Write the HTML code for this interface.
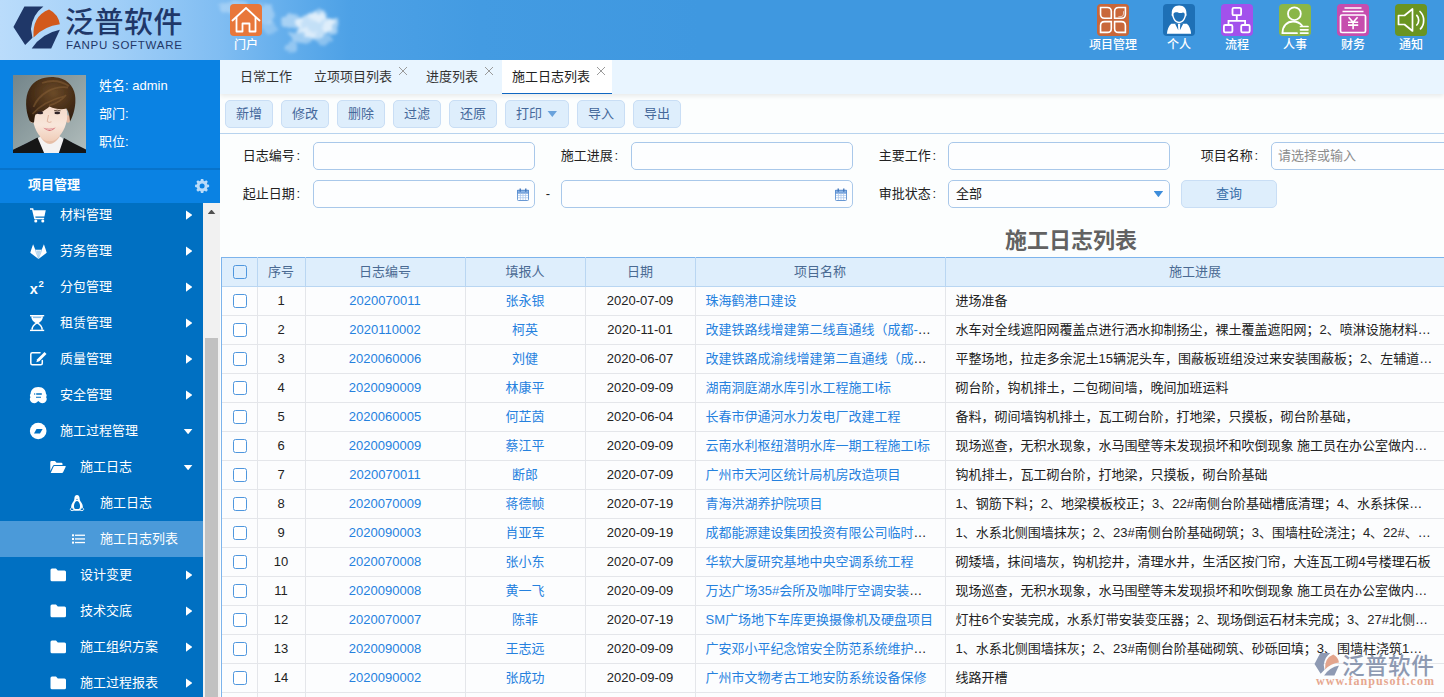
<!DOCTYPE html>
<html lang="zh-CN"><head><meta charset="utf-8"><title>施工日志列表</title>
<style>
*{box-sizing:border-box;margin:0;padding:0}
html,body{width:1444px;height:697px;overflow:hidden;background:#fcfefe;font-family:"Liberation Sans","Noto Sans CJK SC",sans-serif;font-size:13px;color:#222}
a{text-decoration:none;color:#2581de}
#hdr{position:absolute;left:0;top:0;width:1444px;height:60px;overflow:hidden;
 background:linear-gradient(90deg,#badcfb 0px,#a5d1f8 100px,#80bdf2 220px,#64aeec 285px,#4da1e6 350px,#439be2 480px,#3f98e0 700px,#3f98e0 1444px)}
#hdr .cloud{position:absolute;border-radius:50%;filter:blur(3px)}
#logo{position:absolute;left:12px;top:4px}
#logotxt{position:absolute;left:65px;top:5px;font-size:29px;font-weight:500;color:#1f3768;letter-spacing:0.5px;line-height:36px;white-space:nowrap;font-family:"Liberation Sans","Noto Sans CJK SC",sans-serif}
#logoen{position:absolute;left:66px;top:37.5px;font-size:11.5px;color:#1f3768;letter-spacing:0.74px;line-height:14px;white-space:nowrap}
.nav{position:absolute;top:4px;width:32px;height:32px;border-radius:4px}
.navl{position:absolute;top:37px;height:14px;line-height:14px;font-size:12px;font-weight:500;color:#fff;text-align:center;white-space:nowrap}
#side{position:absolute;left:0;top:60px;width:220px;height:637px;background:#0a82e3;overflow:hidden}
#side .info{position:absolute;left:99px;color:#fff;font-size:13px;line-height:16px;white-space:nowrap}
#side .sep{position:absolute;left:0;top:108px;width:220px;height:2px;background:#0773cb}
#side .ttl{position:absolute;left:28px;top:117px;color:#fff;font-weight:700;font-size:13px;line-height:16px}
#menu{position:absolute;left:0;top:143px;width:203px;height:494px;background:#0070c2;overflow:hidden}
.mi{position:absolute;left:0;width:203px;height:36px;color:#fff;font-size:13px;line-height:36px;white-space:nowrap}
.mi.sel{background:#4b9ad9}
.mi svg{position:absolute;top:10px;width:16px;height:16px;fill:#fff;overflow:visible}
.mi .t{position:absolute;top:0}
.mi .ar{position:absolute;left:186px;top:13.4px;width:6.4px;height:9.4px;background:#fff;clip-path:polygon(0 0,100% 50%,0 100%)}
.mi .ad{position:absolute;left:183.4px;top:15.6px;width:9.4px;height:5.6px;background:#fff;clip-path:polygon(0 0,100% 0,50% 100%)}
#sb{position:absolute;left:203px;top:143px;width:17px;height:494px;background:#f1f1f1}
#sb .up{position:absolute;left:4.5px;top:6.6px;width:8px;height:4.6px;background:#505050;clip-path:polygon(50% 0,100% 100%,0 100%)}
#sb .th{position:absolute;left:2px;top:135px;width:13px;height:400px;background:#c1c1c1}
#main{position:absolute;left:220px;top:60px;width:1224px;height:637px;overflow:hidden;background:#fcfefe}
#tabs{position:absolute;left:0;top:0;width:1224px;height:34px;background:#e9f5ff;box-shadow:0 2px 5px rgba(0,0,0,.085)}
.tab{position:absolute;top:0;height:34px;line-height:33px;font-size:13px;color:#333;white-space:nowrap}
.tab.on{background:#fff;border-bottom:1px solid #0f67c2;color:#222}
.tab .x{position:absolute;top:7px;width:8px;height:8px;font-size:0;line-height:0;color:transparent;overflow:hidden;background:linear-gradient(45deg,transparent 44%,#9a9a9a 44%,#9a9a9a 56%,transparent 56%),linear-gradient(-45deg,transparent 44%,#9a9a9a 44%,#9a9a9a 56%,transparent 56%)}
.btn{position:absolute;top:40px;height:28px;border:1px solid #c9def5;border-radius:5px;background:#deeefc;color:#44679a;font-size:13px;line-height:25px;text-align:center;white-space:nowrap}
#tbline{position:absolute;left:0;top:73px;width:1224px;height:1px;background:#b7d3ee}
.lbl{position:absolute;width:80px;text-align:right;font-size:13px;line-height:28px;height:28px;color:#222;white-space:nowrap}
.inp{position:absolute;height:28px;border:1px solid #a9c8ea;border-radius:5px;background:#fdfeff;font-size:13px;line-height:26px;color:#222;padding-left:7px;white-space:nowrap}
#gtitle{position:absolute;left:3px;top:167px;width:1696px;text-align:center;font-size:22px;font-weight:700;color:#626262;line-height:28px}
.tblwrap{position:absolute;left:1px;top:197px;width:1696px}
table.grid{border-collapse:collapse;table-layout:fixed;width:1696px;font-size:13px}
table.grid th{height:29px;padding:0 0 2px 0 !important;background:#deeefc;color:#4a6a93;font-weight:400;border:1px solid #b9d6f2;text-align:center;padding:0}
table.grid td{height:29px;border:1px solid #e4e6ea;text-align:center;padding:0 0 2px 0;color:#222;white-space:nowrap;background:#fcfdfe}
table.grid td.c0, table.grid th.c0{border-left:0}
#lb{position:absolute;left:1px;top:197px;width:1px;height:440px;background:#7db4ec;z-index:3}
table.grid th{border-top-color:#7db4ec !important}
.c0{width:36px}.c1{width:48px}.c2{width:160px}.c3{width:120px}.c4{width:110px}.c5{width:250px}.c6{width:500px}
td.c5,td.c6{text-align:left !important}
.el{overflow:hidden;text-overflow:ellipsis;white-space:nowrap;padding-left:10px}
.w5{width:237px}.w6{width:487px}.w5x{width:249px}
.cb{display:inline-block;width:14px;height:14px;border:1px solid #4f97de;border-radius:2.5px;background:#fff;vertical-align:middle;position:relative;left:1.5px}
th .cb{background:transparent}
#wm{position:absolute;left:1300px;top:640px;width:144px;height:57px}

.z{position:relative;top:-1px}
.co{font-style:normal;padding-left:1.5px}

</style></head><body>
<div id="hdr">
<svg style="position:absolute;left:200px;top:0" width="280" height="60" viewBox="0 0 280 60">
<defs><filter id="cf" x="-20%" y="-20%" width="140%" height="140%"><feTurbulence type="fractalNoise" baseFrequency="0.12" numOctaves="3" seed="7" result="n"/><feDisplacementMap in="SourceGraphic" in2="n" scale="9" xChannelSelector="R" yChannelSelector="G" result="d"/><feGaussianBlur in="d" stdDeviation="1.6"/></filter></defs>
<g filter="url(#cf)" fill="#fff">
<ellipse cx="34" cy="8" rx="14" ry="7" opacity="0.28"/>
<ellipse cx="66" cy="14" rx="9" ry="10" opacity="0.32"/>
<ellipse cx="70" cy="28" rx="6" ry="7" opacity="0.24"/>
<ellipse cx="92" cy="22" rx="11" ry="7" opacity="0.44"/>
<ellipse cx="114" cy="25" rx="19" ry="12" opacity="0.64"/>
<ellipse cx="118" cy="16" rx="10" ry="6" opacity="0.48"/>
<ellipse cx="131" cy="27" rx="8" ry="8" opacity="0.48"/>
<ellipse cx="104" cy="36" rx="14" ry="7" opacity="0.40"/>
<ellipse cx="92" cy="46" rx="7" ry="5" opacity="0.32"/>
<ellipse cx="124" cy="40" rx="8" ry="5" opacity="0.32"/>
</g></svg>
<svg id="logo" style="left:0;top:0;position:absolute" width="220" height="62" viewBox="0 0 1444 407">
<path d="M88,178 L160,42 L285,42 Q212,95 203,190 L213,248 L165,296 Z" fill="#1f3768"/>
<path d="M220,246 Q210,105 322,62 Q382,92 393,160 Q290,172 220,246 Z" fill="#d2591c"/>
<path d="M208,318 Q275,218 393,195 L336,318 Z" fill="#1f3768"/>
</svg>
<div id="logotxt">泛普软件</div>
<div id="logoen">FANPU SOFTWARE</div>

<div class="nav" style="left:230px;background:#e8773a">
<svg width="32" height="32" viewBox="0 0 32 32" fill="none" stroke="#fff" stroke-width="1.8" stroke-linecap="round" stroke-linejoin="round"><path d="M2.5,16.5 L16,4 L29.5,16.5"/><path d="M6.5,13.5 V27.5 H12.5 V19.5 H19.5 V27.5 H25.5 V13.5"/></svg></div>
<div class="navl" style="top:38px;left:222px;width:48px">门户</div>

<div class="nav" style="left:1097px;background:#c9673a">
<svg width="32" height="32" viewBox="0 0 32 32" fill="none" stroke="#fff" stroke-width="1.6" stroke-linejoin="miter"><path d="M3.550,3.550 H10.300 Q14.300,3.550 14.300,7.550 V14.300 H7.550 Q3.550,14.300 3.550,10.300 Z"/><path d="M28.400,3.550 V10.300 Q28.400,14.300 24.400,14.300 H17.600 V7.550 Q17.600,3.550 21.600,3.550 Z"/><path d="M14.300,17.600 V24.400 Q14.300,28.400 10.300,28.400 H3.550 V21.600 Q3.550,17.600 7.550,17.600 Z"/><path d="M17.600,17.600 H24.400 Q28.400,17.600 28.400,21.600 V28.400 H21.600 Q17.600,28.400 17.600,24.400 Z"/><path d="M26.500,7.200 V10 Q26.500,12.400 24,12.600 L21.300,12.800" stroke-width=".7" opacity=".85"/></svg></div>
<div class="navl" style="top:38px;left:1076px;width:74px">项目管理</div>

<div class="nav" style="left:1163px;background:#1e70b6">
<svg width="32" height="32" viewBox="0 0 32 32"><path d="M16.100,1.600 C11,1.600 8.600,5 8.800,9.500 C8.400,10.500 8.600,12 9.400,12.600 C10.200,16.200 12.800,19.200 16.100,19.200 C19.400,19.200 22,16.200 22.800,12.600 C23.600,12 23.800,10.500 23.400,9.500 C23.600,5 21.200,1.600 16.100,1.600 Z" fill="#fff"/><path d="M10.500,10.600 C10.300,9.600 11,8.600 12,8.400 C13.400,8.100 14.500,8.300 15.500,8.700 C17,9.300 18.500,8.900 20,8.400 C21.200,8.400 21.900,9.500 21.700,10.600 C21.400,14.600 19.200,17.700 16.100,17.700 C13,17.700 10.800,14.600 10.500,10.600 Z" fill="#1e70b6"/><path d="M3.900,29.800 C4.200,25.500 5.800,21.800 8.300,19.700 L23.900,19.700 C26.400,21.800 27.800,25.500 28.100,29.800 Z" fill="#fff"/><path d="M11.900,19.600 H14.900 L15.300,26.200 Z M20.300,19.600 H17.300 L16.900,26.200 Z" fill="#1e70b6"/></svg></div>
<div class="navl" style="top:38px;left:1150px;width:58px">个人</div>

<div class="nav" style="left:1221px;background:#a251ec">
<svg width="32" height="32" viewBox="0 0 32 32" fill="none" stroke="#fff" stroke-width="1.8"><rect x="11.500" y="3.800" width="8.600" height="7.400" rx="1.300"/><path d="M15.800,11.200 V16.800 M7.500,21 V16.800 H24.100 V21"/><rect x="2.900" y="21" width="8.500" height="7.400" rx="1.300"/><rect x="20.200" y="21" width="8.500" height="7.400" rx="1.300"/></svg></div>
<div class="navl" style="top:38px;left:1208px;width:58px">流程</div>

<div class="nav" style="left:1279px;background:#8ab648">
<svg width="32" height="32" viewBox="0 0 32 32" fill="none" stroke="#fff" stroke-width="1.8" stroke-linecap="round"><circle cx="15.400" cy="9.700" r="6.400"/><path d="M3.500,29 C3.500,22 8,17.500 14,17.500 C18,17.500 21,19 23,21.500"/><path d="M3.500,29.200 H18"/><path d="M21.500,22.500 H29 M21.500,25.800 H29 M21.500,29.100 H29" stroke-width="1.700"/></svg></div>
<div class="navl" style="top:38px;left:1266px;width:58px">人事</div>

<div class="nav" style="left:1337px;background:#c64dae">
<svg width="32" height="32" viewBox="0 0 32 32" fill="none" stroke="#fff" stroke-width="1.700"><path d="M7.500,4 H24.500 M5.500,7.500 H26.500"/><rect x="3.500" y="11" width="25" height="17.500" rx="1.500"/><path d="M11.600,13.200 L16.100,18.300 L20.600,13.200 M16.100,18.300 V25.200 M11,18.300 H21.200 M11,21.100 H21.200" stroke-width="1.600"/></svg></div>
<div class="navl" style="top:38px;left:1324px;width:58px">财务</div>

<div class="nav" style="left:1395px;background:#6a9422">
<svg width="32" height="32" viewBox="0 0 32 32" fill="none" stroke="#fff" stroke-width="1.700" stroke-linejoin="round" stroke-linecap="round"><path d="M3.500,11.500 H9.500 L17.500,5 V27 L9.500,20.500 H3.500 Z"/><path d="M21.800,11.300 C24.300,13.800 24.300,18.500 21.800,21"/><path d="M25,7.500 C29.800,12 29.800,20.500 25.500,24.800"/></svg></div>
<div class="navl" style="top:38px;left:1382px;width:58px">通知</div>
</div>

<div id="side">
<svg style="position:absolute;left:13px;top:15px" width="73" height="78" viewBox="0 0 73 78">
<defs><linearGradient id="abg" x1="0" y1="0" x2="1" y2="1"><stop offset="0" stop-color="#74858a"/><stop offset=".5" stop-color="#90a0a2"/><stop offset="1" stop-color="#b2bdbc"/></linearGradient>
<radialGradient id="ahr" cx=".55" cy=".35" r=".7"><stop offset="0" stop-color="#6b4a28"/><stop offset=".55" stop-color="#4a3019"/><stop offset="1" stop-color="#2e1d0f"/></radialGradient>
<linearGradient id="afc" x1="0" y1="0" x2="0" y2="1"><stop offset="0" stop-color="#f3d6c4"/><stop offset=".6" stop-color="#f8e6da"/><stop offset="1" stop-color="#f0cdb9"/></linearGradient>
<filter id="abl" x="-5%" y="-5%" width="110%" height="110%"><feGaussianBlur stdDeviation=".5"/></filter></defs>
<rect width="73" height="78" fill="url(#abg)"/>
<g filter="url(#abl)">
<path d="M22,79 L25,63 L30,60 H44 L49.500,63 L53.500,79 Z" fill="#f4f2f2"/>
<path d="M-1,79 V75.300 L14,68 L24.500,62.500 L31.500,79 Z" fill="#141418"/>
<path d="M74,79 V75 L60,68 L51,63 L45.500,79 Z" fill="#141418"/>
<path d="M27.500,54 L27.500,62 Q36.500,76 46.500,62 L46.500,54 Z" fill="#e6bea7"/>
<ellipse cx="19" cy="44" rx="2.200" ry="3.800" fill="#e3b8a1"/><ellipse cx="55" cy="44" rx="2.200" ry="3.800" fill="#e3b8a1"/>
<path d="M19.600,40 C19.600,52 26,62 31,65 C34,66.600 39,66.600 42,65 C47,62 54.300,52 54.300,40 C54.300,30 48,26 37,26 C26,26 19.600,30 19.600,40 Z" fill="url(#afc)"/>
<path d="M16.500,45.500 C12.500,36 11.500,22 16.500,13.500 C21.500,4.500 32,1.200 42,2.200 C52.500,3 60.500,10 62,20 C63.500,30 60.500,40 57,46.500 C56.500,41 56,37 53.500,33.500 C48,35 42,34 36.500,31.500 C32,35.500 26,38.500 22.500,39.500 C21.500,41.500 21.500,44.500 21,47.500 C19,47.500 17.500,47 16.500,45.500 Z" fill="url(#ahr)"/>
<path d="M20.500,32 C26,19 40,10.500 55,12.500 M19.500,39 C27,30.500 38,24.500 52,21 M29,8 C38,4.800 48,5.800 56,11 M36,30.500 C42,29 49,25 53,20" fill="none" stroke="#8a6238" stroke-width="1.800" opacity=".5"/>
<path d="M24,35.800 Q27.300,34.600 30.600,35.800 M41,35.800 Q44.300,34.600 47.600,35.800" fill="none" stroke="#4a3424" stroke-width="1" opacity=".8"/>
<ellipse cx="27.300" cy="37.900" rx="2.900" ry="1.400" fill="#2e2226"/><ellipse cx="44.300" cy="37.900" rx="2.900" ry="1.400" fill="#2e2226"/>
<path d="M35.500,40 L34.200,46.500 Q36.200,48.200 38.500,46.800" fill="none" stroke="#dcae98" stroke-width=".9"/>
<path d="M30.300,52.800 Q36.500,55 42.700,52.400 Q37,59.200 30.300,52.800 Z" fill="#d36e74"/>
<path d="M31.800,53.500 Q36.500,55.200 41.200,53.300 Q36.800,56.300 31.800,53.500 Z" fill="#fdf3f3"/>
</g>
</svg>
<div class="info" style="top:18px">姓名: admin</div>
<div class="info" style="top:46px">部门:</div>
<div class="info" style="top:74px">职位:</div>
<div class="sep"></div>
<div class="ttl">项目管理</div>
<svg style="position:absolute;left:194px;top:118px" width="16" height="16" viewBox="0 0 16 16"><path d="M6.700,0.800 H9.300 L9.700,2.800 L10.900,3.300 L12.600,2.200 L14.400,4 L13.300,5.700 L13.800,6.900 L15.800,7.300 V9.900 L13.800,10.300 L13.300,11.500 L14.400,13.200 L12.600,15 L10.900,13.900 L9.700,14.400 L9.300,16.400 H6.700 L6.300,14.400 L5.100,13.900 L3.400,15 L1.600,13.200 L2.700,11.500 L2.200,10.300 L0.200,9.900 V7.300 L2.200,6.900 L2.700,5.700 L1.600,4 L3.400,2.200 L5.100,3.300 L6.300,2.800 Z M8,5.800 A2.800,2.800 0 1 0 8,11.400 A2.800,2.800 0 1 0 8,5.800 Z" fill="#b9dbf9" fill-rule="evenodd" transform="translate(0.900,0.200) scale(0.900)"/></svg>
<div id="menu">
<div class="mi" style="top:-6px"><svg viewBox="0 0 16 16" style="left:30px"><g transform="translate(-0.3,-0.6) scale(1.03)"><path d="M0.300,1.800 H3.400 L3.900,3.800 H15.600 L14.300,9.900 H5.400 L5.700,11 H14 V12.500 H4.500 L2.300,3.300 H0.300 Z"/><circle cx="5.900" cy="14.200" r="1.500"/><circle cx="12.700" cy="14.200" r="1.500"/></g></svg><span class="t" style="left:60px">材料管理</span><i class="ar"></i></div>
<div class="mi" style="top:30px"><svg viewBox="0 0 16 16" style="left:30px"><path d="M8.500,16 L0.300,9.800 L1.200,6.800 L3.100,1.200 L5.300,6.800 H11.700 L13.900,1.200 L15.800,6.800 L16.700,9.800 Z"/><path d="M8.500,14.800 L6.300,7.400 H10.700 Z" fill="#0070c2" opacity=".28"/><path d="M5.300,7 L8.400,15.400 M11.700,7 L8.600,15.400" stroke="#0070c2" stroke-width=".5" fill="none" opacity=".6"/></svg><span class="t" style="left:60px">劳务管理</span><i class="ar"></i></div>
<div class="mi" style="top:66px"><svg viewBox="0 0 16 16" style="left:30px"><text x="-0.300" y="15.300" font-family="Liberation Sans,sans-serif" font-weight="700" font-size="14.500" fill="#fff">x</text><text x="8.400" y="8.400" font-family="Liberation Sans,sans-serif" font-weight="700" font-size="9.500" fill="#fff">2</text></svg><span class="t" style="left:60px">分包管理</span><i class="ar"></i></div>
<div class="mi" style="top:102px"><svg viewBox="0 0 16 16" style="left:30px"><rect x="0" y="0" width="14.200" height="1.400"/><rect x="0" y="14.700" width="14.200" height="1.400"/><path d="M1.300,1.300 H12.900 C12.900,5 10.800,6.500 8.600,8 H5.600 C3.400,6.500 1.300,5 1.300,1.300 Z"/><rect x="3" y="1.800" width="8.200" height="1.300" fill="#8dbfea"/><path d="M2.100,14.800 C2.100,11 3.900,9.500 7.100,7.900 C10.300,9.500 12.100,11 12.100,14.800" fill="none" stroke="#fff" stroke-width="1.500"/></svg><span class="t" style="left:60px">租赁管理</span><i class="ar"></i></div>
<div class="mi" style="top:138px"><svg viewBox="0 0 16 16" style="left:30px"><path d="M12.300,9.500 V12.300 Q12.300,13.800 10.800,13.800 H2.300 Q0.800,13.800 0.800,12.300 V3.300 Q0.800,1.800 2.300,1.800 H10" fill="none" stroke="#fff" stroke-width="1.500" stroke-linecap="round"/><path d="M14.500,1 L16.500,3 L9.300,10.300 L6.300,11.200 L7.200,8.300 Z"/></svg><span class="t" style="left:60px">质量管理</span><i class="ar"></i></div>
<div class="mi" style="top:174px"><svg viewBox="0 0 16 16" style="left:30px"><path d="M8.300,0 C13.500,0 16,3.500 16,7 C16.900,7.500 16.900,9.500 16,10 C17.100,11 16.900,13 16,14.200 C15,16.200 12,16.600 10,15.600 L8.300,13.900 L6.600,15.600 C4.600,16.600 1.600,16.200 0.600,14.200 C-0.300,13 -0.500,11 0.600,10 C-0.300,9.500 -0.300,7.500 0.600,7 C0.600,3.500 3.100,0 8.300,0 Z"/><path d="M4.200,6.200 H5.200 V7.800 H4.200 Z M6.200,6.200 H11.800 V7.800 H6.200 Z M6,9.800 H11 V10.700 H6 Z" fill="#0070c2"/></svg><span class="t" style="left:60px">安全管理</span><i class="ar"></i></div>
<div class="mi" style="top:210px"><svg viewBox="0 0 16 16" style="left:30px"><circle cx="8.200" cy="8" r="8.300"/><path d="M6.500,6 H12.600 L10,10.600 H4 Z" fill="#0070c2"/></svg><span class="t" style="left:60px">施工过程管理</span><i class="ad"></i></div>
<div class="mi" style="top:246px"><svg viewBox="0 0 16 16" style="left:50px"><path d="M0.300,3.300 Q0.300,2.100 1.500,2.100 H5 L6.500,3.700 H11.300 Q12.500,3.700 12.500,4.900 V6 H4.300 Q3.200,6 2.800,6.900 L0.300,12 Z"/><path d="M4.400,7.100 H15.300 Q16,7.100 15.700,7.800 L13.200,13.100 Q12.800,14 11.900,14 H0.700 L3.500,7.800 Q3.800,7.100 4.400,7.100 Z"/></svg><span class="t" style="left:80px">施工日志</span><i class="ad"></i></div>
<div class="mi" style="top:282px"><svg viewBox="0 0 16 16" style="left:70px"><path d="M7,0.100 C8.700,0.100 9.600,1.500 9.600,3.200 C9.600,5 10.500,6.200 11.500,7.800 C12.500,9.500 13,11 12.800,12.300 L10.500,14 L9.800,15.600 C8.500,15.900 5.500,15.900 4.200,15.600 L3.500,14 L1.200,12.300 C1,11 1.500,9.500 2.500,7.800 C3.500,6.200 4.400,5 4.400,3.200 C4.400,1.500 5.300,0.100 7,0.100 Z"/><path d="M7,6 C8.200,6 9,7.200 9.600,8.800 C10.200,10.500 10.200,12.300 9.500,13.500 C8.800,14.300 5.200,14.300 4.500,13.500 C3.800,12.300 3.800,10.500 4.400,8.800 C5,7.200 5.800,6 7,6 Z" fill="#0070c2"/><path d="M6.100,4.200 L7,5 L7.900,4.200 L7,3.700 Z" fill="#0070c2"/><path d="M0.400,14.700 C0.400,13.500 1.100,12.600 2.100,12.500 L4.300,15.200 C3.400,15.800 0.400,15.800 0.400,14.700 Z M13.600,14.700 C13.600,13.500 12.900,12.600 11.900,12.500 L9.700,15.200 C10.600,15.800 13.600,15.800 13.600,14.700 Z" fill="#0070c2" stroke="#fff" stroke-width=".9"/></svg><span class="t" style="left:100px">施工日志</span></div>
<div class="mi sel" style="top:318px"><svg viewBox="0 0 16 16" style="left:70px"><rect x="2" y="3.300" width="2" height="2"/><rect x="2" y="7" width="2" height="2"/><rect x="2" y="10.600" width="2" height="2"/><rect x="5" y="3.600" width="10" height="1.300"/><rect x="5" y="7.300" width="10" height="1.300"/><rect x="5" y="10.900" width="10" height="1.300"/></svg><span class="t" style="left:100px">施工日志列表</span></div>
<div class="mi" style="top:354px"><svg viewBox="0 0 16 16" style="left:50px"><path d="M0.500,3 Q0.500,1.500 2,1.500 H6 L7.800,3.500 H14.500 Q16,3.500 16,5 V12.800 Q16,14.300 14.500,14.300 H2 Q0.500,14.300 0.500,12.800 Z"/></svg><span class="t" style="left:80px">设计变更</span><i class="ar"></i></div>
<div class="mi" style="top:390px"><svg viewBox="0 0 16 16" style="left:50px"><path d="M0.500,3 Q0.500,1.500 2,1.500 H6 L7.800,3.500 H14.500 Q16,3.500 16,5 V12.800 Q16,14.300 14.500,14.300 H2 Q0.500,14.300 0.500,12.800 Z"/></svg><span class="t" style="left:80px">技术交底</span><i class="ar"></i></div>
<div class="mi" style="top:426px"><svg viewBox="0 0 16 16" style="left:50px"><path d="M0.500,3 Q0.500,1.500 2,1.500 H6 L7.800,3.500 H14.500 Q16,3.500 16,5 V12.800 Q16,14.300 14.500,14.300 H2 Q0.500,14.300 0.500,12.800 Z"/></svg><span class="t" style="left:80px">施工组织方案</span><i class="ar"></i></div>
<div class="mi" style="top:462px"><svg viewBox="0 0 16 16" style="left:50px"><path d="M0.500,3 Q0.500,1.500 2,1.500 H6 L7.800,3.500 H14.500 Q16,3.500 16,5 V12.800 Q16,14.300 14.500,14.300 H2 Q0.500,14.300 0.500,12.800 Z"/></svg><span class="t" style="left:80px">施工过程报表</span><i class="ar"></i></div>
</div>
<div id="sb"><i class="up"></i><i class="th"></i></div>
</div>

<div id="main">
<div id="tabs">
<div class="tab" style="left:10px;width:72px;padding-left:10px">日常工作</div>
<div class="tab" style="left:84px;width:110px;padding-left:10px">立项项目列表<span class="x" style="left:95px">×</span></div>
<div class="tab" style="left:196px;width:84px;padding-left:10px">进度列表<span class="x" style="left:69px">×</span></div>
<div class="tab on" style="left:282px;width:110px;padding-left:10px">施工日志列表<span class="x" style="left:95px">×</span></div>
</div>
<div class="btn" style="left:5px;width:48px">新增</div>
<div class="btn" style="left:61px;width:48px">修改</div>
<div class="btn" style="left:117px;width:48px">删除</div>
<div class="btn" style="left:173px;width:48px">过滤</div>
<div class="btn" style="left:229px;width:48px">还原</div>
<div class="btn" style="left:285px;width:64px;text-align:left;padding-left:10px">打印<i style="position:absolute;left:41.400px;top:9.700px;width:9.800px;height:6.300px;background:#69a2dc;clip-path:polygon(0 0,100% 0,50% 100%)"></i></div>
<div class="btn" style="left:357px;width:48px">导入</div>
<div class="btn" style="left:413px;width:48px">导出</div>
<div id="tbline"></div>

<div class="lbl" style="left:0;top:82px">日志编号<i class="co">:</i></div>
<div class="inp" style="left:93px;top:82px;width:222px"></div>
<div class="lbl" style="left:318px;top:82px">施工进展<i class="co">:</i></div>
<div class="inp" style="left:411px;top:82px;width:222px"></div>
<div class="lbl" style="left:636px;top:82px">主要工作<i class="co">:</i></div>
<div class="inp" style="left:728px;top:82px;width:222px"></div>
<div class="lbl" style="left:958px;top:82px">项目名称<i class="co">:</i></div>
<div class="inp" style="left:1051px;top:82px;width:222px;color:#8c8c8c;padding-left:6px">请选择或输入</div>

<div class="lbl" style="left:0;top:120px">起止日期<i class="co">:</i></div>
<div class="inp" style="left:93px;top:120px;width:222px"><svg class="cal" style="position:absolute;left:203px;top:7px" width="12" height="13" viewBox="0 0 13 14"><rect x="0.500" y="2.500" width="12" height="11" rx="1" fill="#fff" stroke="#5b8fd0"/><rect x="0.500" y="2.500" width="12" height="3" fill="#8db5e6" stroke="#5b8fd0"/><path d="M3.500,0.500 V4 M9.500,0.500 V4" stroke="#4477bb" stroke-width="1.500"/><path d="M1,8 H12 M1,10.500 H12 M3.700,6 V13 M6.500,6 V13 M9.300,6 V13" stroke="#a9c6ec" stroke-width="0.800"/></svg></div>
<div class="lbl" style="left:322px;top:120px;width:12px;text-align:center">-</div>
<div class="inp" style="left:341px;top:120px;width:292px"><svg class="cal" style="position:absolute;left:273px;top:7px" width="12" height="13" viewBox="0 0 13 14"><rect x="0.500" y="2.500" width="12" height="11" rx="1" fill="#fff" stroke="#5b8fd0"/><rect x="0.500" y="2.500" width="12" height="3" fill="#8db5e6" stroke="#5b8fd0"/><path d="M3.500,0.500 V4 M9.500,0.500 V4" stroke="#4477bb" stroke-width="1.500"/><path d="M1,8 H12 M1,10.500 H12 M3.700,6 V13 M6.500,6 V13 M9.300,6 V13" stroke="#a9c6ec" stroke-width="0.800"/></svg></div>
<div class="lbl" style="left:636px;top:120px">审批状态<i class="co">:</i></div>
<div class="inp" style="left:728px;top:120px;width:222px">全部<i style="position:absolute;left:204.600px;top:9.900px;width:9.600px;height:6.400px;background:#3d8ddb;clip-path:polygon(0 0,100% 0,50% 100%)"></i></div>
<div class="btn" style="left:961px;top:120px;width:96px;color:#3a6fa8">查询</div>

<div id="gtitle">施工日志列表</div>
<div id="lb"></div>

<div class="tblwrap"><table class="grid"><thead><tr><th class="c0"><span class="cb"></span></th><th class="c1"><span class="z">序号</span></th><th class="c2"><span class="z">日志编号</span></th><th class="c3"><span class="z">填报人</span></th><th class="c4"><span class="z">日期</span></th><th class="c5"><span class="z">项目名称</span></th><th class="c6"><span class="z">施工进展</span></th><th class="c7"></th></tr></thead><tbody>
<tr><td class="c0"><span class="cb"></span></td><td class="c1">1</td><td class="c2"><a>2020070011</a></td><td class="c3"><a class="z">张永银</a></td><td class="c4">2020-07-09</td><td class="c5"><div class="el w5 z"><a>珠海鹤港口建设</a></div></td><td class="c6"><div class="el w6 z">进场准备</div></td><td class="c7"></td></tr>
<tr><td class="c0"><span class="cb"></span></td><td class="c1">2</td><td class="c2"><a>2020110002</a></td><td class="c3"><a class="z">柯英</a></td><td class="c4">2020-11-01</td><td class="c5"><div class="el w5 z"><a>改建铁路线增建第二线直通线（成都-西安）施工项目</a></div></td><td class="c6"><div class="el w6 z">水车对全线遮阳网覆盖点进行洒水抑制扬尘，裸土覆盖遮阳网；2、喷淋设施材料进场安装调试完成</div></td><td class="c7"></td></tr>
<tr><td class="c0"><span class="cb"></span></td><td class="c1">3</td><td class="c2"><a>2020060006</a></td><td class="c3"><a class="z">刘健</a></td><td class="c4">2020-06-07</td><td class="c5"><div class="el w5 z"><a>改建铁路成渝线增建第二直通线（成都-重庆）</a></div></td><td class="c6"><div class="el w6 z">平整场地，拉走多余泥土15辆泥头车，围蔽板班组没过来安装围蔽板；2、左辅道路面清理完成</div></td><td class="c7"></td></tr>
<tr><td class="c0"><span class="cb"></span></td><td class="c1">4</td><td class="c2"><a>2020090009</a></td><td class="c3"><a class="z">林康平</a></td><td class="c4">2020-09-09</td><td class="c5"><div class="el w5 z"><a>湖南洞庭湖水库引水工程施工I标</a></div></td><td class="c6"><div class="el w6 z">砌台阶，钩机排土，二包砌间墙，晚间加班运料</div></td><td class="c7"></td></tr>
<tr><td class="c0"><span class="cb"></span></td><td class="c1">5</td><td class="c2"><a>2020060005</a></td><td class="c3"><a class="z">何芷茵</a></td><td class="c4">2020-06-04</td><td class="c5"><div class="el w5 z"><a>长春市伊通河水力发电厂改建工程</a></div></td><td class="c6"><div class="el w6 z">备料，砌间墙钩机排土，瓦工砌台阶，打地梁，只摸板，砌台阶基础，</div></td><td class="c7"></td></tr>
<tr><td class="c0"><span class="cb"></span></td><td class="c1">6</td><td class="c2"><a>2020090009</a></td><td class="c3"><a class="z">蔡江平</a></td><td class="c4">2020-09-09</td><td class="c5"><div class="el w5 z"><a>云南水利枢纽潜明水库一期工程施工I标</a></div></td><td class="c6"><div class="el w6 z">现场巡查，无积水现象，水马围壁等未发现损坏和吹倒现象 施工员在办公室做内业资料整理</div></td><td class="c7"></td></tr>
<tr><td class="c0"><span class="cb"></span></td><td class="c1">7</td><td class="c2"><a>2020070011</a></td><td class="c3"><a class="z">断郎</a></td><td class="c4">2020-07-09</td><td class="c5"><div class="el w5 z"><a>广州市天河区统计局机房改造项目</a></div></td><td class="c6"><div class="el w6 z">钩机排土，瓦工砌台阶，打地梁，只摸板，砌台阶基础</div></td><td class="c7"></td></tr>
<tr><td class="c0"><span class="cb"></span></td><td class="c1">8</td><td class="c2"><a>2020070009</a></td><td class="c3"><a class="z">蒋德帧</a></td><td class="c4">2020-07-19</td><td class="c5"><div class="el w5 z"><a>青海洪湖养护院项目</a></div></td><td class="c6"><div class="el w6 z">1、钢筋下料；2、地梁模板校正；3、22#南侧台阶基础槽底清理；4、水系抹保护层完成</div></td><td class="c7"></td></tr>
<tr><td class="c0"><span class="cb"></span></td><td class="c1">9</td><td class="c2"><a>2020090003</a></td><td class="c3"><a class="z">肖亚军</a></td><td class="c4">2020-09-19</td><td class="c5"><div class="el w5 z"><a>成都能源建设集团投资有限公司临时用电工程</a></div></td><td class="c6"><div class="el w6 z">1、水系北侧围墙抹灰；2、23#南侧台阶基础砌筑；3、围墙柱砼浇注；4、22#、23#台阶回填</div></td><td class="c7"></td></tr>
<tr><td class="c0"><span class="cb"></span></td><td class="c1">10</td><td class="c2"><a>2020070008</a></td><td class="c3"><a class="z">张小东</a></td><td class="c4">2020-07-09</td><td class="c5"><div class="el w5 z"><a>华软大厦研究基地中央空调系统工程</a></div></td><td class="c6"><div class="el w6 z">砌矮墙，抹间墙灰，钩机挖井，清理水井，生活区按门帘，大连瓦工砌4号楼理石板</div></td><td class="c7"></td></tr>
<tr><td class="c0"><span class="cb"></span></td><td class="c1">11</td><td class="c2"><a>2020090008</a></td><td class="c3"><a class="z">黄一飞</a></td><td class="c4">2020-09-09</td><td class="c5"><div class="el w5 z"><a>万达广场35#会所及咖啡厅空调安装工程项目</a></div></td><td class="c6"><div class="el w6 z">现场巡查，无积水现象，水马围壁等未发现损坏和吹倒现象 施工员在办公室做内业资料整理</div></td><td class="c7"></td></tr>
<tr><td class="c0"><span class="cb"></span></td><td class="c1">12</td><td class="c2"><a>2020070007</a></td><td class="c3"><a class="z">陈菲</a></td><td class="c4">2020-07-19</td><td class="c5"><div class="el w5x z"><a>SM广场地下车库更换摄像机及硬盘项目</a></div></td><td class="c6"><div class="el w6 z">灯柱6个安装完成，水系灯带安装变压器；2、现场倒运石材未完成；3、27#北侧台阶砌筑完成</div></td><td class="c7"></td></tr>
<tr><td class="c0"><span class="cb"></span></td><td class="c1">13</td><td class="c2"><a>2020090008</a></td><td class="c3"><a class="z">王志远</a></td><td class="c4">2020-09-09</td><td class="c5"><div class="el w5 z"><a>广安邓小平纪念馆安全防范系统维护工程项目</a></div></td><td class="c6"><div class="el w6 z">1、水系北侧围墙抹灰；2、23#南侧台阶基础砌筑、砂砾回填；3、围墙柱浇筑1、2段完成</div></td><td class="c7"></td></tr>
<tr><td class="c0"><span class="cb"></span></td><td class="c1">14</td><td class="c2"><a>2020090002</a></td><td class="c3"><a class="z">张成功</a></td><td class="c4">2020-09-09</td><td class="c5"><div class="el w5 z"><a>广州市文物考古工地安防系统设备保修</a></div></td><td class="c6"><div class="el w6 z">线路开槽</div></td><td class="c7"></td></tr>
<tr><td class="c0"></td><td class="c1"></td><td class="c2"></td><td class="c3"></td><td class="c4"></td><td class="c5"></td><td class="c6"></td><td class="c7"></td></tr>
</tbody></table></div>
</div>
<div id="wm">
<svg width="144" height="57" viewBox="1300 640 144 57" style="position:absolute;left:0;top:0">
<g transform="translate(1307.430,649.590) scale(0.0803,0.0812)">
<path d="M88,178 L160,42 L285,42 Q212,95 203,190 L213,248 L165,296 Z" fill="#8e9ab3"/>
<path d="M220,246 Q210,105 322,62 Q382,92 393,160 Q290,172 220,246 Z" fill="#e3a58d"/>
<path d="M208,318 Q275,218 393,195 L336,318 Z" fill="#8e9ab3"/>
</g>
</svg>
<div style="position:absolute;left:42px;top:11.5px;font-size:22.600px;font-weight:500;color:#8d99b1;line-height:30px;white-space:nowrap;letter-spacing:0.45px">泛普软件</div>
<div style="position:absolute;left:16px;top:34px;font-family:'Liberation Serif',serif;font-weight:700;font-size:12px;color:#e6a78f;line-height:14px;letter-spacing:1.040px;white-space:nowrap">www.fanpusoft.com</div>
</div>

</body></html>
